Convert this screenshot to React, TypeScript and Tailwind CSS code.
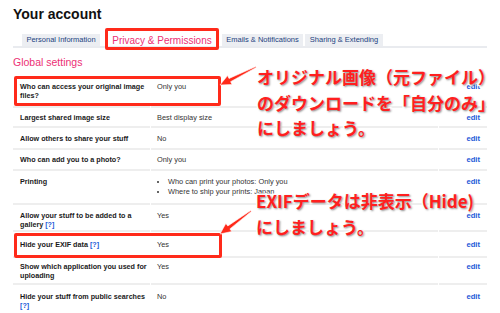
const rows = [
  { label: ['Who can access your original image', 'files?'], value: 'Only you', cls: 'h-[34px] pt-[8px]' },
  { label: ['Largest shared image size'], value: 'Best display size', cls: 'h-[20px] pt-[5px]' },
  { label: ['Allow others to share your stuff'], value: 'No', cls: 'h-[22px] pt-[6px]' },
  { label: ['Who can add you to a photo?'], value: 'Only you', cls: 'h-[21px] pt-[5px]' },
  { label: ['Printing'], value: null, cls: 'h-[34px] pt-[6px]' },
  { label: ['Allow your stuff to be added to a', 'gallery'], help: true, value: 'Yes', cls: 'h-[27px] pt-[6px]' },
  { label: ['Hide your EXIF data'], help: true, value: 'Yes', cls: 'h-[26px] pt-[8px]' },
  { label: ['Show which application you used for', 'uploading'], value: 'Yes', cls: 'h-[27px] pt-[4px]' },
  { label: ['Hide your stuff from public searches', ''], help: true, value: 'No', cls: 'h-[30px] pt-[7px]' },
];

const calloutCls =
  "absolute font-['Noto_Sans_CJK_JP',sans-serif] font-bold text-[17px] leading-[25.5px] text-[#ff1f1f] whitespace-nowrap [-webkit-text-stroke:3px_white] [paint-order:stroke_fill] [text-shadow:1px_1px_2px_rgba(0,0,0,0.45)]";

export default function App() {
  return (
    <div className="relative w-[500px] h-[313px] overflow-hidden bg-white font-['Liberation_Sans',Arial,sans-serif]">
      <h1 className="pl-[13px] pt-[6px] text-[14px] leading-[17px] font-bold text-[#111]">Your account</h1>

      {/* Tabs */}
      <div className="ml-[13px] mt-[11px] w-[474px] h-[14px] flex items-start pl-[9px] border-b-2 border-[#e9ebef] text-[7.5px] text-[#22427f]">
        <div className="w-[78px] h-[12px] bg-[#eceef2] flex items-center justify-center">Personal Information</div>
        <div className="ml-[5px] w-[114px] h-[12px] flex items-center justify-center text-[10px] text-[#ec2f75]">
          Privacy &amp; Permissions
        </div>
        <div className="ml-[3px] w-[81px] h-[12px] bg-[#eceef2] flex items-center justify-center">Emails &amp; Notifications</div>
        <div className="ml-[2px] w-[78px] h-[12px] bg-[#eceef2] flex items-center justify-center">Sharing &amp; Extending</div>
      </div>

      <h2 className="pl-[13px] mt-[8px] text-[10.5px] leading-[13px] text-[#ec2f75]">Global settings</h2>

      {/* Settings table */}
      <div className="ml-[13px] mt-[5px] w-[474px] text-[7.4px] leading-[9px]">
        {rows.map((r, i) => (
          <div key={i} className="grid grid-cols-[137px_287px_48px] gap-x-[1px]">
            <div className={`pl-[7px] border-b-2 border-[#eeeeee] font-bold text-[7.2px] text-[#1a1a1a] whitespace-nowrap ${r.cls}`}>
              {r.label.map((l, j) => (
                <div key={j}>
                  {l}
                  {r.help && j === r.label.length - 1 && (
                    <>
                      {l ? ' ' : ''}
                      <span className="text-[#1c5ad8]">[?]</span>
                    </>
                  )}
                </div>
              ))}
            </div>
            <div className={`pl-[6px] border-b-2 border-[#eeeeee] text-[#333] ${r.cls}`}>
              {r.value ?? (
                <ul className="pl-[11px] list-disc leading-[10px]">
                  <li>Who can print your photos: Only you</li>
                  <li>Where to ship your prints: Japan</li>
                </ul>
              )}
            </div>
            <div className={`pr-[7px] text-right border-b-2 border-[#eeeeee] font-bold text-[7.6px] text-[#1c5ad8] ${r.cls}`}>edit</div>
          </div>
        ))}
      </div>

      {/* Annotation boxes */}
      <div className="absolute left-[105px] top-[28px] w-[114px] h-[22px] border-[3px] border-[#ff2a1a] rounded-[2px]" />
      <div className="absolute left-[14px] top-[76px] w-[207px] h-[30px] border-[3px] border-[#ff2a1a] rounded-[2px]" />
      <div className="absolute left-[14px] top-[233px] w-[208px] h-[25px] border-[3px] border-[#ff2a1a] rounded-[2px]" />

      <svg className="absolute inset-0 pointer-events-none" width="500" height="313">
        <g fill="#ff2a1a" stroke="#fff" strokeWidth="0.6" strokeLinejoin="round">
          <polygon points="220,85 232.1,84.5 230.6,81.7 256.2,67.4 255.8,66.6 229,78.5 227.6,75.6" />
          <polygon points="220,234 231.8,231.5 229.9,228.9 251.3,211.4 250.7,210.6 227.8,226 225.85,223.4" />
        </g>
      </svg>

      {/* Callouts */}
      <div className={`${calloutCls} left-[257px] top-[64px]`}>
        <div>オリジナル画像（元ファイル）</div>
        <div>のダウンロードを「自分のみ」</div>
        <div>にしましょう。</div>
      </div>
      <div className={`${calloutCls} left-[256px] top-[188px]`}>
        <div>EXIFデータは非表示（Hide)</div>
        <div>にしましょう。</div>
      </div>
    </div>
  );
}
